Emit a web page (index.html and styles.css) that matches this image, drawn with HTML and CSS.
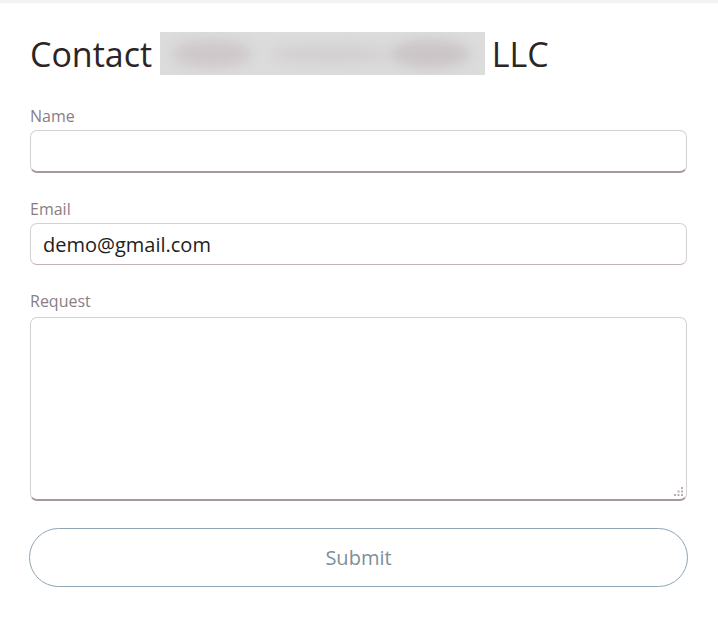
FILE: index.html
```html
<!DOCTYPE html>
<html>
<head>
<meta charset="utf-8">
<link rel="stylesheet" href="styles.css">
</head>
<body>
<div class="topstrip"></div>
<form class="form">
  <h1 class="title">Contact <span class="redacted"><span class="blob b1"></span><span class="blob b2"></span><span class="blob b3"></span></span> LLC</h1>
  <div class="field">
    <label class="label">Name</label>
    <div class="input input-name"></div>
  </div>
  <div class="field">
    <label class="label">Email</label>
    <div class="input input-email">demo@gmail.com</div>
  </div>
  <div class="field">
    <label class="label">Request</label>
    <div class="input textarea">
      <svg class="grip" width="9" height="9" viewBox="0 0 9 9"><g fill="#b7aeb2"><rect x="7" y="0" width="2" height="2"/><rect x="7" y="3.5" width="2" height="2"/><rect x="7" y="7" width="2" height="2"/><rect x="3.5" y="3.5" width="2" height="2"/><rect x="3.5" y="7" width="2" height="2"/><rect x="0" y="7" width="2" height="2"/></g></svg>
    </div>
  </div>
  <div class="submit">Submit</div>
</form>
</body>
</html>
```
FILE: styles.css
```css
html, body {
  margin: 0;
  padding: 0;
  background: #ffffff;
}
body {
  font-family: "Open Sans", "Liberation Sans", sans-serif;
  width: 718px;
  height: 634px;
  overflow: hidden;
}
.topstrip {
  height: 3px;
  background: #f2f2f2;
}
.form {
  display: flex;
  flex-direction: column;
  padding: 0 31px 0 30px;
}
.title {
  margin: 29px 0 0 0;
  font-size: 34px;
  line-height: 40px;
  font-weight: 400;
  color: #2b2526;
  display: flex;
  align-items: center;
  white-space: pre;
}
.redacted {
  position: relative;
  display: inline-block;
  width: 325px;
  height: 43px;
  margin: 0 -2px 0 -1px;
  background: #dcdcdc;
  overflow: hidden;
  filter: blur(0.5px);
}
.blob {
  position: absolute;
  border-radius: 50%;
  filter: blur(6px);
}
.b1 { left: 12px; top: 8px; width: 80px; height: 28px; background: #cfc8ca; }
.b2 { left: 110px; top: 12px; width: 120px; height: 20px; background: #d4d0d1; }
.b3 { left: 230px; top: 8px; width: 80px; height: 28px; background: #cbc5c7; }
.field {
  display: flex;
  flex-direction: column;
}
.field + .field { margin-top: 27px; }
.field:first-of-type { margin-top: 32px; }
.label {
  font-size: 16px;
  line-height: 18px;
  color: #8a7e83;
  margin-bottom: 5px;
}
.input {
  box-sizing: border-box;
  height: 43px;
  border: 1px solid #d6d0d2;
  border-bottom: 2px solid #a8989e;
  border-radius: 7px;
  font-size: 20px;
  color: #1e1e1e;
  padding: 0 12px;
  display: flex;
  align-items: center;
}
.input-email {
  height: 42px;
  border-bottom: 1px solid #c0b4b8;
}
.textarea {
  position: relative;
  height: 184px;
  margin-top: 2px;
}
.grip {
  position: absolute;
  right: 3px;
  bottom: 3px;
}
.submit {
  box-sizing: border-box;
  margin-top: 27px;
  height: 59px;
  margin-left: -1px;
  margin-right: -1px;
  border: 1px solid #8fa6b5;
  border-radius: 30px;
  display: flex;
  align-items: center;
  justify-content: center;
  font-size: 20px;
  color: #7d8f9b;
}
```
